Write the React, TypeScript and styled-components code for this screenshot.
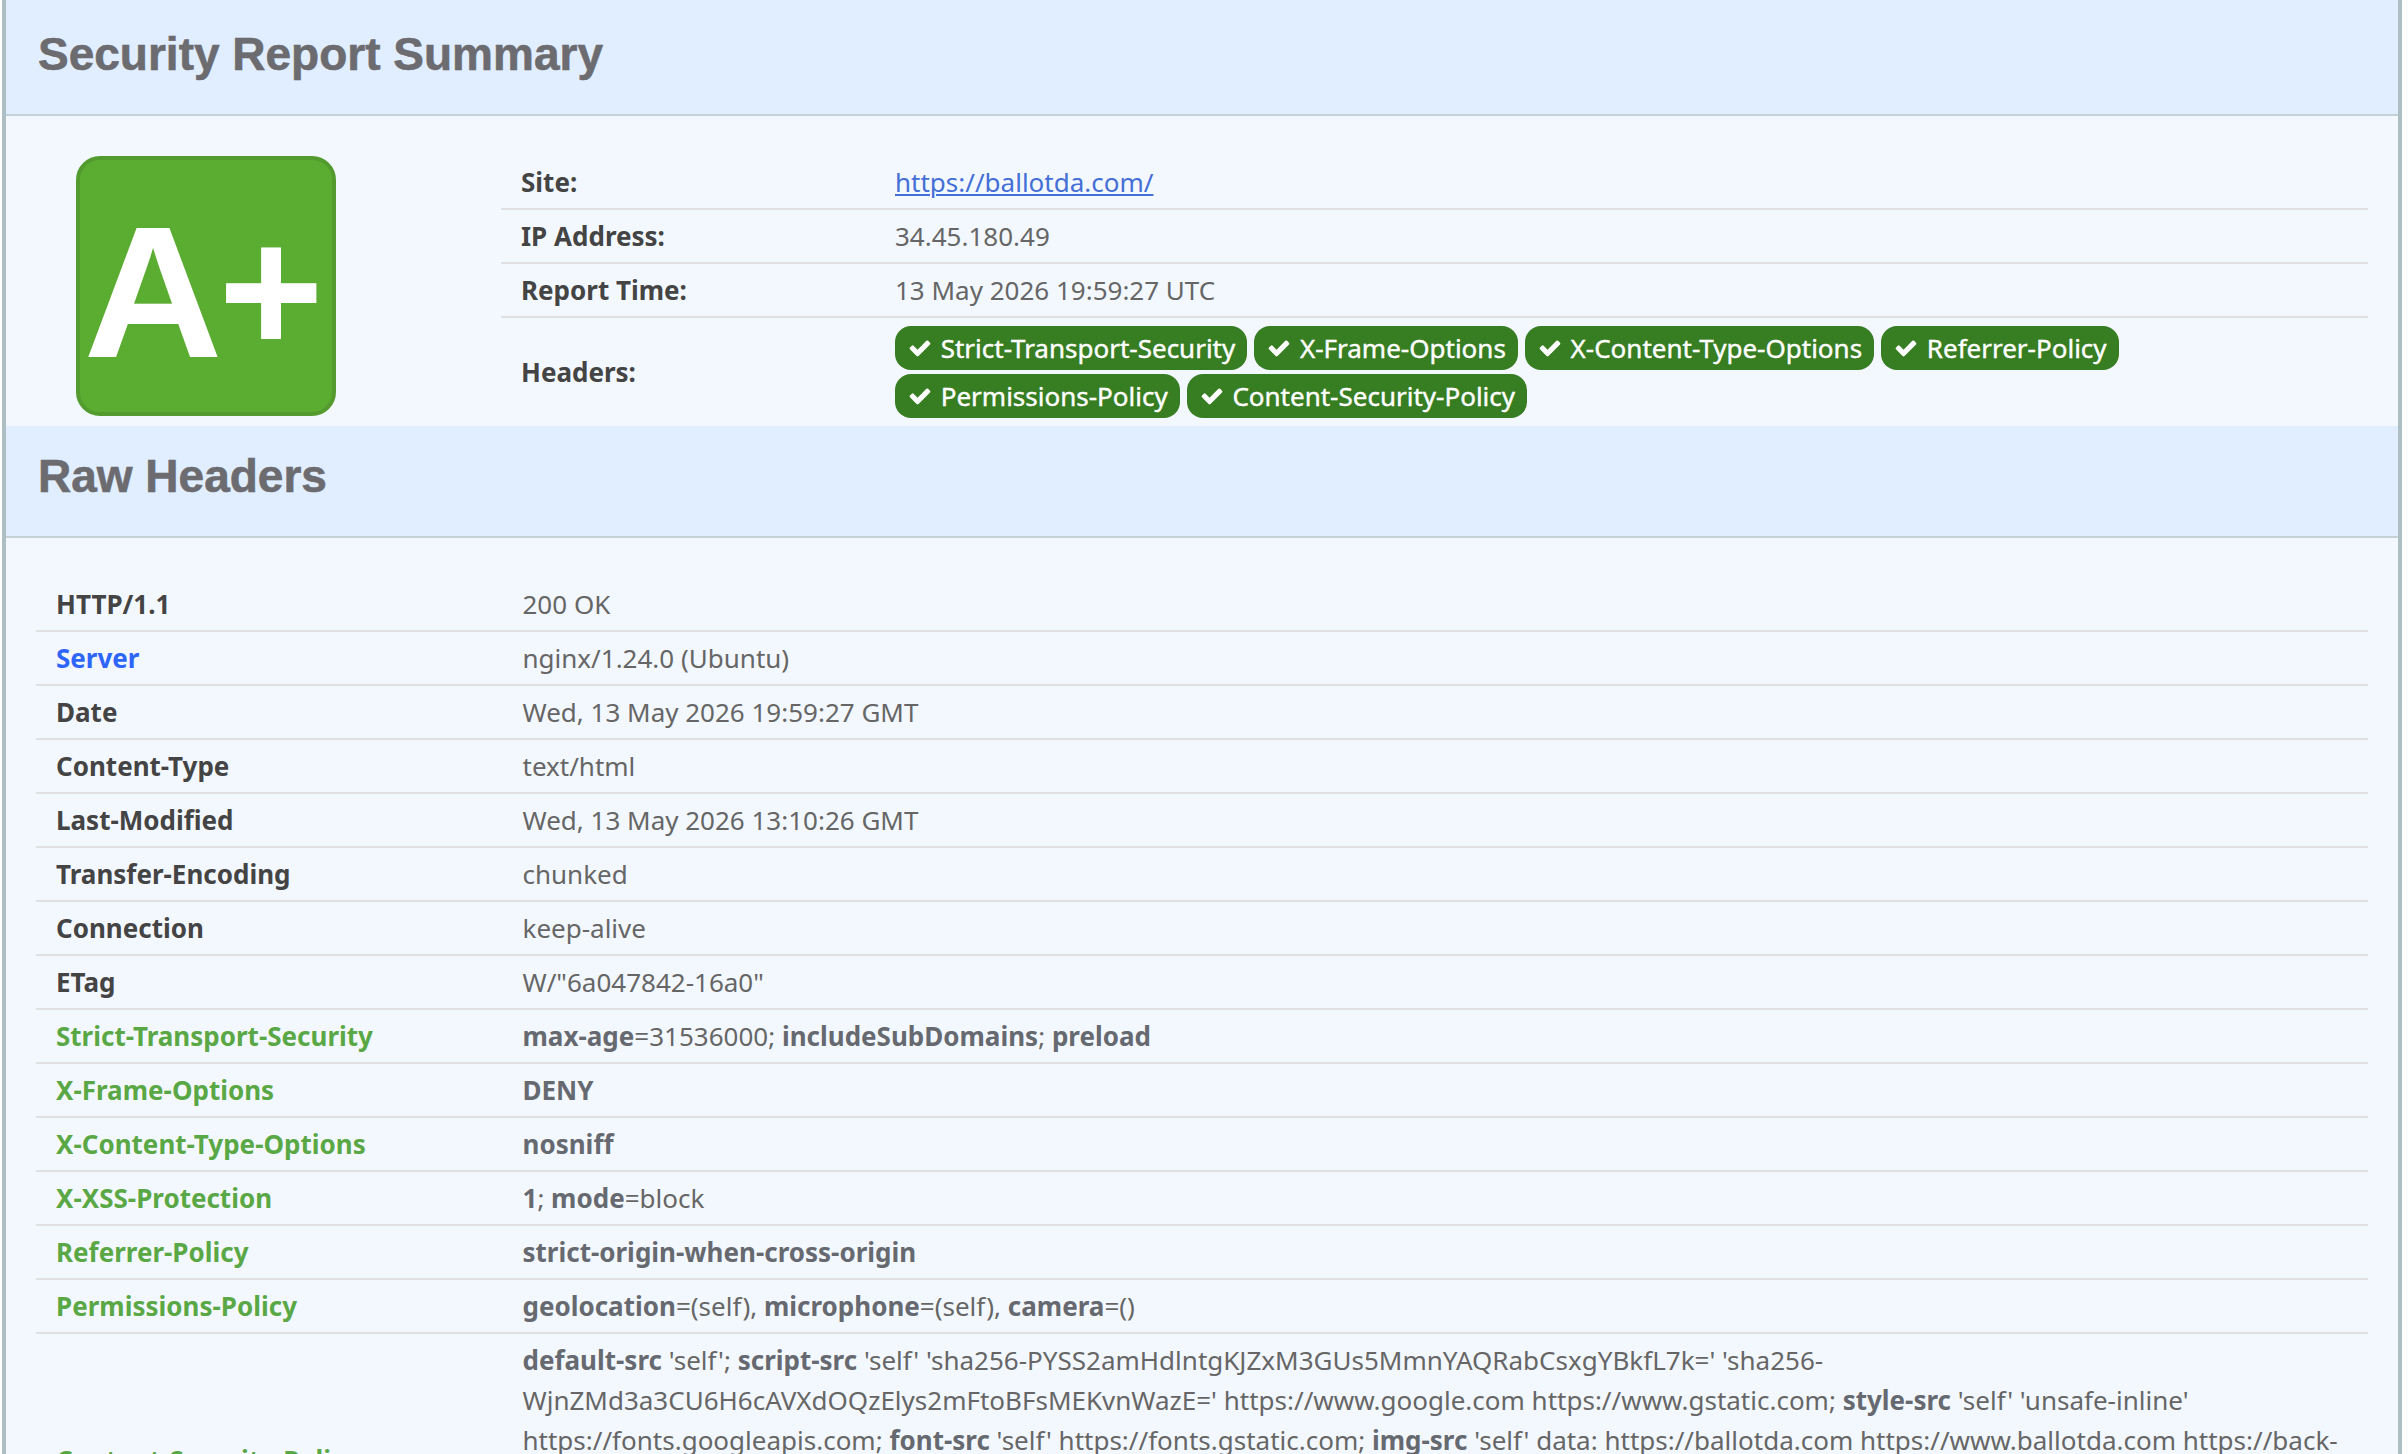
import React from "react";
import styled, { createGlobalStyle } from "styled-components";

const Global = createGlobalStyle`
  *, *::before, *::after { box-sizing: border-box; }
  body {
    margin: 0;
    background: #fff;
    font-family: "Noto Sans", sans-serif;
    font-size: 26px;
    line-height: 40px;
    color: #666;
  }
`;

const Page = styled.main`
  height: 1454px;
  overflow: hidden;
  padding: 0 6px 0 2px;
`;

const Report = styled.div`
  height: 100%;
  overflow: hidden;
  border: solid #adbfc2;
  border-width: 0 4px;
  background: #f3f8ff;
`;

const PanelHeading = styled.header<{ $height: number; $top: number }>`
  height: ${(p) => p.$height}px;
  padding: ${(p) => p.$top}px 32px 0;
  background: #e0eeff;
  border-bottom: 2px solid #c5d1d5;
`;

const Title = styled.h2`
  margin: 0;
  font: bold 46px/52px "Liberation Sans", Arial, sans-serif;
  color: #6b6b70;
  -webkit-text-stroke: 0.6px #6b6b70;
`;

const SummaryBody = styled.div`
  display: grid;
  grid-template-columns: 465px 1fr;
  padding: 40px 30px 0 30px;
`;

const Grade = styled.div`
  width: 260px;
  height: 260px;
  margin-left: 40px;
  border: 4px solid #539b2e;
  border-radius: 24px;
  background: #5bad31;
  color: #fff;
  font: bold 180px/266px "Liberation Sans", Arial, sans-serif;
  white-space: nowrap;
  text-align: center;
`;

const GradeLetter = styled.span`
  display: inline-block;
  transform: translateY(-1px) scale(1.07, 1.045);
`;

const GradeSign = styled.span`
  display: inline-block;
  transform: translateY(-2px);
`;

const Table = styled.dl<{ $pad?: boolean }>`
  margin: 0;
  padding: ${(p) => (p.$pad ? "40px 30px 0" : "0")};
`;

const Row = styled.div<{ $label: number; $height?: number }>`
  display: grid;
  grid-template-columns: ${(p) => p.$label}px 1fr;
  align-items: center;
  min-height: ${(p) => p.$height ?? 54}px;
  padding: 6px 20px;
  border-top: 2px solid #e0e0e0;
  &:first-child { border-top: 0; min-height: 52px; }
`;

const Label = styled.dt<{ $tone?: Tone }>`
  font-weight: bold;
  color: ${(p) => (p.$tone === "good" ? "#5aa845" : p.$tone === "info" ? "#2f66fa" : "#444")};
`;

const Value = styled.dd`
  margin: 0;
  align-self: start;
  b { color: #666a70; }
`;

const SiteLink = styled.a`
  color: #446fd6;
  text-decoration: underline;
  text-decoration-thickness: 2px;
  text-underline-offset: 2px;
`;

const Pills = styled.div`
  display: flex;
  flex-wrap: wrap;
  gap: 4px 7px;
  padding: 2px 0;
`;

const Pill = styled.span`
  display: flex;
  align-items: center;
  gap: 8.7px;
  height: 44px;
  padding: 0 12px 0 13px;
  border-radius: 16px;
  background: #377d22;
  color: #fff;
  -webkit-text-stroke: 0.4px #fff;
  svg { width: 24px; height: 24px; }
`;

type Tone = "good" | "info";

const Check = () => (
  <svg viewBox="0 0 1792 1792" fill="currentColor" aria-hidden="true">
    <path d="M1671 566q0 40-28 68l-724 724-136 136q-28 28-68 28t-68-28l-136-136-362-362q-28-28-28-68t28-68l136-136q28-28 68-28t68 28l294 295 656-657q28-28 68-28t68 28l136 136q28 28 28 68z" />
  </svg>
);

const passed = [
  "Strict-Transport-Security",
  "X-Frame-Options",
  "X-Content-Type-Options",
  "Referrer-Policy",
  "Permissions-Policy",
  "Content-Security-Policy",
];

const rawHeaders: { name: string; tone?: Tone; value: React.ReactNode }[] = [
  { name: "HTTP/1.1", value: "200 OK" },
  { name: "Server", tone: "info", value: "nginx/1.24.0 (Ubuntu)" },
  { name: "Date", value: "Wed, 13 May 2026 19:59:27 GMT" },
  { name: "Content-Type", value: "text/html" },
  { name: "Last-Modified", value: "Wed, 13 May 2026 13:10:26 GMT" },
  { name: "Transfer-Encoding", value: "chunked" },
  { name: "Connection", value: "keep-alive" },
  { name: "ETag", value: 'W/"6a047842-16a0"' },
  {
    name: "Strict-Transport-Security",
    tone: "good",
    value: <><b>max-age</b>=31536000; <b>includeSubDomains</b>; <b>preload</b></>,
  },
  { name: "X-Frame-Options", tone: "good", value: <b>DENY</b> },
  { name: "X-Content-Type-Options", tone: "good", value: <b>nosniff</b> },
  { name: "X-XSS-Protection", tone: "good", value: <><b>1</b>; <b>mode</b>=block</> },
  { name: "Referrer-Policy", tone: "good", value: <b>strict-origin-when-cross-origin</b> },
  {
    name: "Permissions-Policy",
    tone: "good",
    value: <><b>geolocation</b>=(self), <b>microphone</b>=(self), <b>camera</b>=()</>,
  },
];

export default function App() {
  return (
    <Page>
      <Global />
      <Report>
        <section>
          <PanelHeading $height={116} $top={28}>
            <Title>Security Report Summary</Title>
          </PanelHeading>
          <SummaryBody>
            <Grade>
              <GradeLetter>A</GradeLetter><GradeSign>+</GradeSign>
            </Grade>
            <Table>
              <Row $label={374}>
                <Label>Site:</Label>
                <Value><SiteLink href="#">https://ballotda.com/</SiteLink></Value>
              </Row>
              <Row $label={374}>
                <Label>IP Address:</Label>
                <Value>34.45.180.49</Value>
              </Row>
              <Row $label={374}>
                <Label>Report Time:</Label>
                <Value>13 May 2026 19:59:27 UTC</Value>
              </Row>
              <Row $label={374}>
                <Label>Headers:</Label>
                <Value>
                  <Pills>
                    {passed.map((name) => (
                      <Pill key={name}><Check />{name}</Pill>
                    ))}
                  </Pills>
                </Value>
              </Row>
            </Table>
          </SummaryBody>
        </section>
        <section>
          <PanelHeading $height={112} $top={24}>
            <Title>Raw Headers</Title>
          </PanelHeading>
          <Table $pad>
            {rawHeaders.map((h) => (
              <Row key={h.name} $label={466.5}>
                <Label $tone={h.tone}>{h.name}</Label>
                <Value>{h.value}</Value>
              </Row>
            ))}
            <Row $label={466.5} $height={254}>
              <Label $tone="good">Content-Security-Policy</Label>
              <Value>
                <b>default-src</b> 'self'; <b>script-src</b> 'self' 'sha256-PYSS2amHdlntgKJZxM3GUs5MmnYAQRabCsxgYBkfL7k=' 'sha256-<br />
                WjnZMd3a3CU6H6cAVXdOQzElys2mFtoBFsMEKvnWazE=' https://www.google.com https://www.gstatic.com; <b>style-src</b> 'self' 'unsafe-inline'<br />
                https://fonts.googleapis.com; <b>font-src</b> 'self' https://fonts.gstatic.com; <b>img-src</b> 'self' data: https://ballotda.com https://www.ballotda.com https://back-
              </Value>
            </Row>
          </Table>
        </section>
      </Report>
    </Page>
  );
}
